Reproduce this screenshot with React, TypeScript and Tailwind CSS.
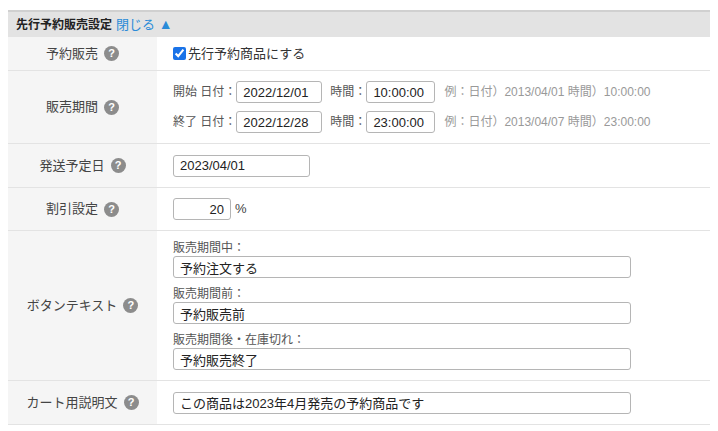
import React from 'react';

const Help = () => (
  <span className="inline-flex items-center justify-center w-[15px] h-[15px] rounded-full bg-[#8c8c8c] text-white text-[11px] font-bold ml-1.5 leading-none">?</span>
);

const Row = ({ label, children, h }: { label: string; children: React.ReactNode; h: string }) => (
  <div className={`flex border-b border-[#e3e3e3] ${h}`}>
    <div className="w-[149px] shrink-0 bg-[#f5f5f5] flex items-center justify-center text-[13px] text-[#444]">
      {label}
      <Help />
    </div>
    <div className="flex-1 bg-white pl-[16px] flex flex-col justify-center">{children}</div>
  </div>
);

const Input = ({ value, w, right }: { value: string; w: string; right?: boolean }) => (
  <input
    readOnly
    value={value}
    className={`${w} h-[22px] border border-[#b5b5b5] rounded-[3px] px-1.5 text-[13px] text-[#222] bg-white outline-none ${right ? 'text-right' : ''}`}
  />
);

export default function App() {
  return (
    <div className="w-[718px] h-[431px] bg-white pt-[10px] px-[8px] text-[#444]" style={{ fontFamily: '"Liberation Sans", "Noto Sans CJK JP", sans-serif' }}>
      <div className="border-t-2 border-[#d0d0d0]">
        <div className="h-[25px] bg-[#e3e3e3] flex items-center px-2 text-[12px] font-bold text-[#222]">
          先行予約販売設定
          <span className="ml-1 font-normal text-[13px] text-[#2a8bd8]">閉じる <span className="text-[14px]">▲</span></span>
        </div>
        <Row label="予約販売" h="h-[34px]">
          <label className="flex items-center text-[13px] text-[#333]">
            <input type="checkbox" readOnly checked className="w-[13px] h-[13px] mr-0.5 accent-[#1a73e8]" />
            先行予約商品にする
          </label>
        </Row>
        <Row label="販売期間" h="h-[73px]">
          {[
            ['開始', '2022/12/01', '10:00:00', '2013/04/01', '10:00:00'],
            ['終了', '2022/12/28', '23:00:00', '2013/04/07', '23:00:00'],
          ].map(([a, d, t, ed, et], i) => (
            <div key={i} className={`flex items-center text-[12px] text-[#555] ${i ? 'mt-[8px]' : ''}`}>
              <span>{a} 日付：</span>
              <Input value={d} w="w-[86px]" />
              <span className="ml-[8px]">時間：</span>
              <Input value={t} w="w-[69px]" />
              <span className="ml-[9px] text-[#999]">例：日付）{ed} 時間）{et}</span>
            </div>
          ))}
        </Row>
        <Row label="発送予定日" h="h-[44px]">
          <Input value="2023/04/01" w="w-[137px]" />
        </Row>
        <Row label="割引設定" h="h-[43px]">
          <div className="flex items-center text-[13px]">
            <Input value="20" w="w-[58px]" right />
            <span className="ml-1">%</span>
          </div>
        </Row>
        <Row label="ボタンテキスト" h="h-[150px]">
          {[
            ['販売期間中：', '予約注文する'],
            ['販売期間前：', '予約販売前'],
            ['販売期間後・在庫切れ：', '予約販売終了'],
          ].map(([l, v], i) => (
            <div key={i} className={i ? 'mt-[6px]' : ''}>
              <div className="text-[12px] text-[#555] leading-[16px]">{l}</div>
              <Input value={v} w="w-[458px]" />
            </div>
          ))}
        </Row>
        <Row label="カート用説明文" h="h-[44px]">
          <Input value="この商品は2023年4月発売の予約商品です" w="w-[458px]" />
        </Row>
      </div>
    </div>
  );
}
